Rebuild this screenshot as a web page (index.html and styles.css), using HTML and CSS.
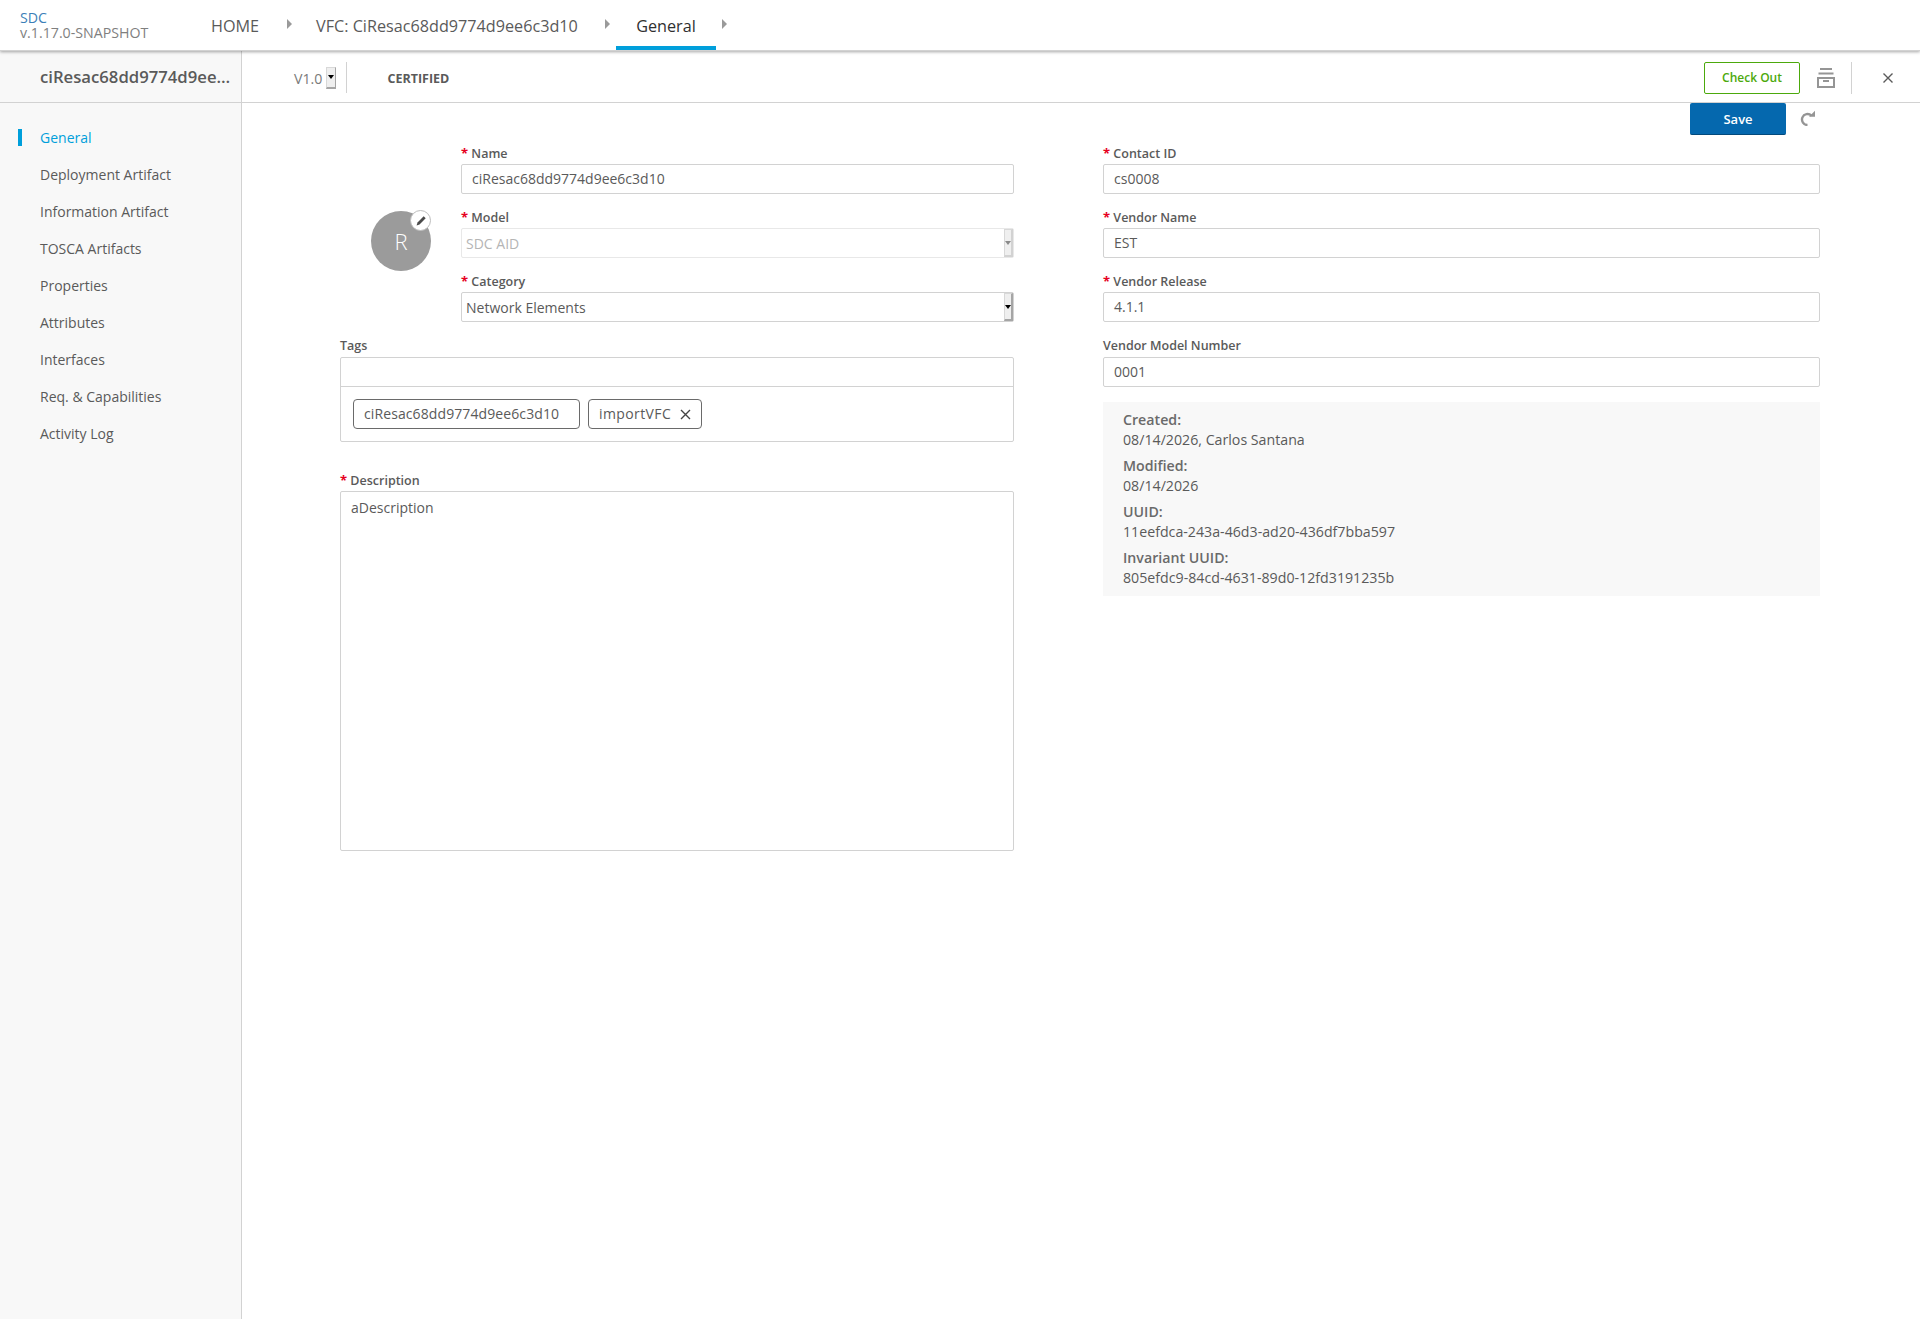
FILE: index.html
```html
<!DOCTYPE html>
<html lang="en">
<head>
<meta charset="utf-8">
<title>SDC</title>
<link rel="stylesheet" href="styles.css">
</head>
<body>
<header class="topbar">
  <div class="brand"><div class="brand-name">SDC</div><div class="brand-version">v.1.17.0-SNAPSHOT</div></div>
  <nav class="crumbs">
    <div class="crumb home">HOME</div><span class="tri"></span>
    <div class="crumb vfc">VFC: CiResac68dd9774d9ee6c3d10</div><span class="tri"></span>
    <div class="crumb active">General</div><span class="tri"></span>
  </nav>
</header>
<div class="shell">
  <aside class="sidebar">
    <div class="side-title"><span class="side-title-text">ciResac68dd9774d9ee…</span></div>
    <ul class="menu">
      <li class="menu-item selected">General</li>
      <li class="menu-item">Deployment Artifact</li>
      <li class="menu-item">Information Artifact</li>
      <li class="menu-item">TOSCA Artifacts</li>
      <li class="menu-item">Properties</li>
      <li class="menu-item">Attributes</li>
      <li class="menu-item">Interfaces</li>
      <li class="menu-item">Req. &amp; Capabilities</li>
      <li class="menu-item">Activity Log</li>
    </ul>
  </aside>
  <main class="content">
    <div class="subhead">
      <div class="version"><span class="version-text">V1.0</span><span class="spin"><i class="spin-arrow"></i></span></div>
      <div class="state">CERTIFIED</div>
      <div class="sub-actions">
        <button class="btn-outline">Check Out</button>
        <svg class="archive" width="18" height="20" viewBox="0 0 18 20" fill="none" stroke="#959595" stroke-width="2"><path d="M3 1h12M1.500 5.500h15"/><path d="M1 10h16v9H1z"/><path d="M6 13h6"/></svg>
        <span class="vsep"></span>
        <svg class="close" width="12" height="12" viewBox="0 0 12 12" stroke="#5a5a5a" stroke-width="1.400"><path d="M1.500 1.500l9 9M10.500 1.500l-9 9"/></svg>
      </div>
    </div>
    <div class="toolbar">
      <button class="btn-save">Save</button>
      <svg class="revert" width="16" height="16" viewBox="0 0 16 16" fill="none"><path d="M11.400 5.600A5.500 5.500 0 1 0 7.500 15" stroke="#959595" stroke-width="2.400"/><path d="M9 6.800h6V.800z" fill="#959595"/></svg>
    </div>
    <div class="form">
      <section class="col-left">
        <div class="top-left">
          <div class="avatar-wrap">
            <div class="avatar">R</div>
            <div class="badge"><svg width="12" height="12" viewBox="0 0 12 12"><path d="M8.700 1.300l2 2-6.200 6.200-2.900.9.900-2.900z" fill="#4a4a4a"/></svg></div>
          </div>
          <div class="top-fields">
            <div class="field"><div class="label"><b class="req">*</b> Name</div><div class="input">ciResac68dd9774d9ee6c3d10</div></div>
            <div class="field"><div class="label"><b class="req">*</b> Model</div><div class="input select disabled">SDC AID<span class="spin wide"><i class="spin-arrow"></i></span></div></div>
            <div class="field"><div class="label"><b class="req">*</b> Category</div><div class="input select">Network Elements<span class="spin wide"><i class="spin-arrow"></i></span></div></div>
          </div>
        </div>
        <div class="field tags-field">
          <div class="label">Tags</div>
          <div class="tags">
            <div class="tags-entry"></div>
            <div class="tags-list">
              <span class="tag">ciResac68dd9774d9ee6c3d10</span>
              <span class="tag import">importVFC<svg class="tag-x" width="11" height="11" viewBox="0 0 11 11" stroke="#444" stroke-width="1.400"><path d="M1 1l9 9M10 1l-9 9"/></svg></span>
            </div>
          </div>
        </div>
        <div class="field desc-field">
          <div class="label"><b class="req">*</b> Description</div>
          <div class="textarea">aDescription</div>
        </div>
      </section>
      <section class="col-right">
        <div class="field"><div class="label"><b class="req">*</b> Contact ID</div><div class="input">cs0008</div></div>
        <div class="field"><div class="label"><b class="req">*</b> Vendor Name</div><div class="input">EST</div></div>
        <div class="field"><div class="label"><b class="req">*</b> Vendor Release</div><div class="input">4.1.1</div></div>
        <div class="field last"><div class="label">Vendor Model Number</div><div class="input">0001</div></div>
        <div class="info">
          <div class="info-row"><div class="info-key">Created:</div><div class="info-val">08/14/2026, Carlos Santana</div></div>
          <div class="info-row"><div class="info-key">Modified:</div><div class="info-val">08/14/2026</div></div>
          <div class="info-row"><div class="info-key">UUID:</div><div class="info-val">11eefdca-243a-46d3-ad20-436df7bba597</div></div>
          <div class="info-row"><div class="info-key">Invariant UUID:</div><div class="info-val">805efdc9-84cd-4631-89d0-12fd3191235b</div></div>
        </div>
      </section>
    </div>
  </main>
</div>
</body>
</html>
```

FILE: styles.css
```css
* { box-sizing: border-box; }
html, body { margin: 0; height: 100%; }
body { font-family: "Open Sans", sans-serif; color: #5a5a5a; background: #fff; font-size: 14px; height: 1319px; overflow: hidden; display: flex; flex-direction: column; }

.topbar { height: 51px; flex: none; display: flex; background: #fff; box-shadow: 0 1px 3px rgba(0,0,0,.35); border-bottom: 1px solid #d2d2d2; position: relative; z-index: 2; padding-left: 20px; }
.brand { width: 191px; padding-top: 10px; font-size: 14.200px; line-height: 15px; }
.brand-name { color: #3c7fb8; font-weight: 500; }
.brand-version { color: #7f7f7f; font-weight: 500; }
.crumbs { display: flex; align-items: stretch; }
.crumb { font-size: 16.200px; height: 50px; line-height: 52px; color: #5a5a5a; }
.crumb.home { width: 76px; }
.crumb.vfc { width: 263px; white-space: nowrap; }
.crumb.active { color: #2f2f2f; width: 100px; text-align: center; border-bottom: 4px solid #009fdb; }
.tri { width: 0; height: 0; margin-top: 19px; border-left: 5px solid #9a9a9a; border-top: 5px solid transparent; border-bottom: 5px solid transparent; }
.crumb.home + .tri { margin-right: 24px; }
.crumb.vfc + .tri { margin-left: 26px; margin-right: 6px; }
.crumb.active + .tri { margin-left: 6px; }

.shell { flex: 1; display: flex; min-height: 0; }
.sidebar { width: 242px; flex: none; background: #f8f8f8; border-right: 1px solid #d2d2d2; }
.side-title { height: 52px; border-bottom: 1px solid #d2d2d2; padding: 0 0 0 40px; display: flex; align-items: center; }
.side-title-text { font-size: 16.700px; font-weight: 600; color: #5a5a5a; white-space: nowrap; }
.menu { list-style: none; margin: 17px 0 0; padding: 0; }
.menu-item { height: 37px; line-height: 36px; padding-left: 40px; font-size: 14px; color: #5a5a5a; position: relative; }
.menu-item.selected { color: #009fdb; }
.menu-item.selected::before { content: ""; position: absolute; left: 18px; top: 9px; width: 4px; height: 17px; background: #009fdb; }

.content { flex: 1; min-width: 0; }
.subhead { height: 52px; border-bottom: 1px solid #d2d2d2; display: flex; align-items: center; padding: 2px 0 0 52px; }
.version { display: flex; align-items: center; font-size: 14.200px; color: #7a7a7a; padding-right: 10px; height: 31px; border-right: 1px solid #d2d2d2; }
.version-text { padding-top: 2px; }
.spin { width: 10px; height: 22px; margin-left: 4px; background: #efefef; border: 1px solid #d8d8d8; border-right-color: #a5a5a5; border-bottom: 2px solid #a5a5a5; display: flex; align-items: center; justify-content: center; }
.spin-arrow { width: 0; height: 0; border-left: 3px solid transparent; border-right: 3px solid transparent; border-top: 4px solid #000; }
.state { margin-left: 40px; padding-top: 1px; font-size: 12.500px; font-weight: 700; color: #5a5a5a; }
.sub-actions { margin-left: auto; display: flex; align-items: center; padding-right: 26px; }
.btn-outline { width: 96px; height: 32px; background: #fff; border: 1px solid #4ca90c; border-radius: 2px; color: #4ca90c; font: 600 12px "Open Sans", sans-serif; padding: 0; }
.archive { margin-left: 17px; }
.vsep { width: 1px; height: 32px; background: #d2d2d2; margin: 0 30px 0 16px; }

.toolbar { height: 31px; display: flex; align-items: flex-start; padding-left: 1448px; }
.btn-save { width: 96px; height: 32px; background: #0568ae; border: 0; border-bottom: 1px solid #034a7c; border-radius: 2px; color: #fff; font: 600 13px "Open Sans", sans-serif; padding: 0; }
.revert { margin: 7px 0 0 14px; }

.form { display: flex; padding-left: 98px; }
.col-left { width: 674px; flex: none; }
.col-right { width: 717px; flex: none; margin-left: 89px; padding-top: 10px; }
.top-left { display: flex; padding-top: 10px; }
.avatar-wrap { width: 121px; flex: none; padding: 67px 0 0 31px; position: relative; }
.avatar { width: 60px; height: 60px; border-radius: 50%; background: #9b9b9b; color: #fff; font-size: 22px; font-weight: 300; display: flex; align-items: center; justify-content: center; }
.badge { position: absolute; left: 70px; top: 66px; width: 21px; height: 21px; border-radius: 50%; background: #fff; border: 1px solid #bdbdbd; display: flex; align-items: center; justify-content: center; }
.top-fields { flex: 1; }

.field { height: 64px; }
.label { height: 20px; line-height: 18px; font-size: 12.500px; font-weight: 600; color: #5a5a5a; }
.req { color: #e6001f; font-weight: 700; font-size: 13px; }
.input { height: 30px; border: 1px solid #d2d2d2; border-radius: 2px; padding: 0 10px; line-height: 27px; font-size: 14px; color: #5a5a5a; background: #fff; }
.select { padding-left: 4px; position: relative; line-height: 29px; }
.select.disabled { color: #b5b5b5; border-color: #e8e8e8; background: #fff; }
.select.disabled .spin-arrow { border-top-color: #8a8a8a; }
.select.disabled .spin { border-right-color: #d2d2d2; border-bottom-color: #d2d2d2; }
.spin.wide { position: absolute; right: 0; top: 0; width: 9px; height: 28px; margin: 0; border-right-width: 2px; }

.tags-field { height: 95px; margin-top: 1px; }
.tags { height: 85px; border: 1px solid #d2d2d2; border-radius: 2px; }
.tags-entry { height: 29px; border-bottom: 1px solid #d2d2d2; }
.tags-list { display: flex; gap: 8px; padding: 12px 0 0 12px; }
.tag { height: 30px; border: 1px solid #6a6a6a; border-radius: 4px; padding: 0 10px 2px; font-size: 14px; letter-spacing: .1px; color: #5a5a5a; display: flex; align-items: center; }
.tag:first-child { width: 227px; }
.tag.import { letter-spacing: .4px; }
.tag-x { margin-left: 9px; margin-top: 2px; }

.desc-field { margin-top: 39px; height: auto; }
.desc-field .label { height: 20px; }
.textarea { height: 360px; border: 1px solid #d2d2d2; border-radius: 2px; padding: 5px 10px; font-size: 14px; line-height: 22px; color: #5a5a5a; }

.field.last { height: 65px; }
.col-right .field:nth-child(3) { height: 65px; }
.info { height: 194px; background: #f8f8f8; padding: 8px 20px 0; }
.info-row { height: 46px; line-height: 20px; font-size: 14.200px; }
.info-key { font-weight: 600; color: #6a6a6a; }
.info-val { color: #5a5a5a; }
```
